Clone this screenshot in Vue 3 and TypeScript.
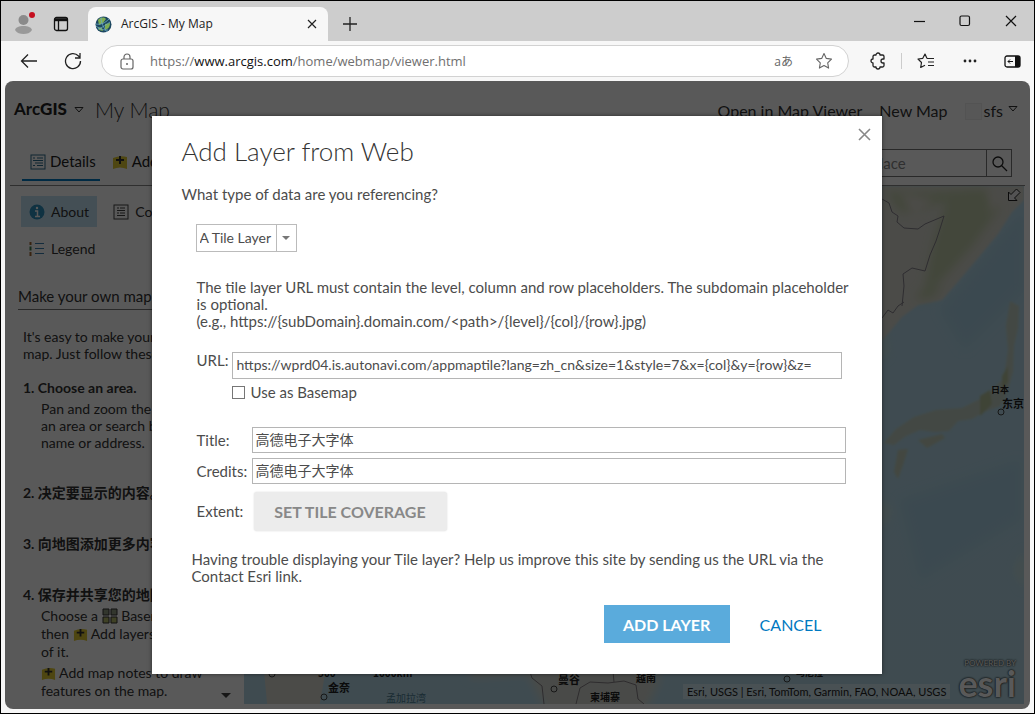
<script setup lang="ts">
import { ref } from 'vue'

interface Place { name: string; x: number; y: number; size: number; soft?: boolean }

const dataType = ref('tile')
const url = ref('https://wprd04.is.autonavi.com/appmaptile?lang=zh_cn&size=1&style=7&x={col}&y={row}&z=')
const asBasemap = ref(false)
const title = ref('高德电子大字体')
const credits = ref('高德电子大字体')
const place = ref('')

const places: Place[] = [
  { name: '日本', x: 991, y: 393, size: 9 },
  { name: '东京', x: 1002, y: 408, size: 11 },
  { name: '金奈', x: 328, y: 692, size: 11 },
  { name: '孟加拉湾', x: 386, y: 702, size: 10, soft: true },
  { name: '曼谷', x: 558, y: 684, size: 11 },
  { name: '越南', x: 636, y: 682, size: 10 },
  { name: '柬埔寨', x: 590, y: 701, size: 10 },
  { name: '马尼拉', x: 796, y: 676, size: 9 },
  { name: '500', x: 318, y: 677, size: 10 },
  { name: '1000km', x: 373, y: 677, size: 10 },
]
const cities: [number, number][] = [[1001, 412], [324, 697], [554, 689], [787, 679], [272, 674]]
</script>

<template>
  <div class="window">
    <header class="tabbar">
      <button class="bare profile" aria-label="Profile">
        <svg width="24" height="24" viewBox="0 0 24 24"><circle cx="10.500" cy="9" r="5" fill="#8a8a8a" /><path d="M2 19c1-3 4-4 8.500-4s7.500 1 8.500 4c-2 3-5 4-8.500 4S4 22 2 19z" fill="#999" /><circle cx="19" cy="4" r="3" fill="#c50f1f" /></svg>
      </button>
      <button class="bare spaces" aria-label="Tab actions">
        <svg width="16" height="16" viewBox="0 0 16 16" fill="none" stroke="#111" stroke-width="1.300"><rect x="1.500" y="1.500" width="13" height="13" rx="2" /><path d="M1.500 3h13M5.500 5v9.500" /><path d="M2 4h12" stroke-width="2.400" /></svg>
      </button>
      <div class="tab">
        <svg width="17" height="17" viewBox="0 0 17 17"><circle cx="8.500" cy="8.500" r="8" fill="#1c4760" /><path d="M3 4c3-3 6-3 8-1L8 7 4 9zM10 8l5-1c0 4-2 6-5 7zM3 11l4 1 1 3-4-1z" fill="#7fae52" /><path d="M1 8c5 1 9-1 13-5M3 13c4-1 9-5 12-7M6 1c0 5 2 10 6 15M1 10c5 4 8 4 12 4" stroke="#6fa9c4" stroke-width=".8" fill="none" /></svg>
        <span class="tab-title">ArcGIS - My Map</span>
        <button class="bare" aria-label="Close tab">
          <svg width="10" height="10" viewBox="0 0 10 10" stroke="#222" stroke-width="1.200"><path d="M1 1l8 8M9 1l-8 8" /></svg>
        </button>
      </div>
      <button class="bare newtab" aria-label="New tab">
        <svg width="14" height="14" viewBox="0 0 14 14" stroke="#222" stroke-width="1.300"><path d="M7 0v14M0 7h14" /></svg>
      </button>
      <div class="winctl">
        <button class="bare" aria-label="Minimize"><svg width="11" height="12" viewBox="0 0 11 12"><path d="M0 6.500h11" stroke="#111" stroke-width="1.200" /></svg></button>
        <button class="bare" aria-label="Maximize"><svg width="12" height="12" viewBox="0 0 12 12"><rect x="1" y="1" width="9.500" height="9.500" rx="1.500" fill="none" stroke="#111" stroke-width="1.200" /></svg></button>
        <button class="bare" aria-label="Close"><svg width="12" height="12" viewBox="0 0 12 12"><path d="M1 1l10 10M11 1L1 11" stroke="#111" stroke-width="1.200" /></svg></button>
      </div>
    </header>

    <nav class="toolbar">
      <button class="bare" aria-label="Back"><svg width="18" height="16" viewBox="0 0 18 16" fill="none" stroke="#222" stroke-width="1.300"><path d="M17 8H1.500M8 1.500L1.500 8 8 14.500" /></svg></button>
      <button class="bare reload" aria-label="Refresh"><svg width="18" height="18" viewBox="0 0 18 18" fill="none" stroke="#222" stroke-width="1.300"><path d="M16.500 9A7.500 7.500 0 1 1 14.500 4L16 5.500M16 1v5h-5" /></svg></button>
      <div class="address">
        <svg width="14" height="17" viewBox="0 0 14 17" fill="none" stroke="#666" stroke-width="1.200"><rect x="1" y="6" width="12" height="10" rx="2" /><path d="M4 6V4a3 3 0 0 1 6 0v2" /><circle cx="7" cy="11" r="1" fill="#666" stroke="none" /></svg>
        <span class="url">https://<b>www.arcgis.com</b>/home/webmap/viewer.html</span>
        <button class="bare translate" aria-label="Translate">aあ</button>
        <button class="bare" aria-label="Add to favorites"><svg width="18" height="18" viewBox="0 0 18 18" fill="none" stroke="#666" stroke-width="1.100" stroke-linejoin="round"><path d="M9 1.500l2.300 4.900 5.200.7-3.800 3.700.9 5.300L9 13.600l-4.600 2.500.9-5.300L1.500 7.100l5.200-.7z" /></svg></button>
      </div>
      <button class="bare ext" aria-label="Extensions"><svg width="18" height="18" viewBox="0 0 18 18" fill="none" stroke="#222" stroke-width="1.300" stroke-linejoin="round"><path d="M5.500 3H7a2 2 0 0 1 4 0h2.500A1.500 1.500 0 0 1 15 4.500V7h-1a2 2 0 0 0 0 4h1v2.500a1.500 1.500 0 0 1-1.500 1.500H11a2 2 0 0 1-4 0H5.500A1.500 1.500 0 0 1 4 13.500V11a2 2 0 0 1 0-4V4.500A1.500 1.500 0 0 1 5.500 3z" /></svg></button>
      <span class="sep"></span>
      <button class="bare" aria-label="Favorites"><svg width="18" height="18" viewBox="0 0 18 18" fill="none" stroke="#222" stroke-width="1.200" stroke-linejoin="round"><path d="M10 6.500L8 2 5.800 6.300 1 7l3.500 3.500L3.700 15.500 8 13.200M8 2l2 4.500M10 6.500h7M11 10h6M11 13.500h6" /></svg></button>
      <button class="bare dots" aria-label="More"><svg width="14" height="4" viewBox="0 0 14 4" fill="#222"><circle cx="2" cy="2" r="1.400" /><circle cx="7" cy="2" r="1.400" /><circle cx="12" cy="2" r="1.400" /></svg></button>
      <button class="bare side" aria-label="Sidebar"><svg width="17" height="13" viewBox="0 0 17 13"><rect x="1" y="1" width="15" height="11" rx="2" fill="none" stroke="#111" stroke-width="1.300" /><path d="M11 1h3a2 2 0 0 1 2 2v7a2 2 0 0 1-2 2h-3z" fill="#111" /><path d="M9 6.500H4M6 4.500l-2 2 2 2" fill="none" stroke="#111" /></svg></button>
    </nav>

    <main class="page">
      <div class="site-head">
        <span class="brand">Arc<b>GIS</b></span>
        <svg class="tri" width="10" height="8" viewBox="0 0 10 8" fill="none" stroke="#333"><path d="M1 1.500h8L5 6z" /></svg>
        <span class="map-name">My Map</span>
        <div class="links">
          <a href="#">Open in Map Viewer</a>
          <a href="#">New Map</a>
          <a href="#" class="user"><span class="avatar"></span>sfs
            <svg width="10" height="8" viewBox="0 0 10 8" fill="none" stroke="#333"><path d="M1 1.500h8L5 6z" /></svg></a>
        </div>
      </div>

      <div class="ribbon">
        <button class="bare rib active"><svg width="16" height="16" viewBox="0 0 16 16" fill="none" stroke="#2a6b8c"><rect x="1" y="1" width="14" height="14" /><path d="M3 4h2M7 4h6M3 6.500h10M5 9h8M3 11.500h2M7 11.500h6" /></svg>Details</button>
        <button class="bare rib"><svg width="16" height="16" viewBox="0 0 16 16"><path d="M1 4q7-3 14-1v12q-7-3-14 0z" fill="#e0c832" /><path d="M8 2v8M4 6h8" stroke="#333" stroke-width="2" /></svg>Add</button>
        <div class="finder">
          <input v-model="place" type="text" placeholder="Find address or place" aria-label="Find address or place" />
          <button class="bare" aria-label="Search"><svg width="17" height="17" viewBox="0 0 17 17" fill="none" stroke="#222" stroke-width="1.300"><circle cx="7" cy="7" r="5" /><path d="M10.500 10.500l5.500 5.500" /></svg></button>
        </div>
      </div>

      <div class="body">
        <aside class="pane">
          <div class="modes">
            <button class="bare mode on"><svg width="16" height="16" viewBox="0 0 16 16"><circle cx="8" cy="8" r="7.500" fill="#2d8fbd" /><path d="M6 7h2.500v5M6 12.500h5" stroke="#fff" stroke-width="1.500" fill="none" /><circle cx="8" cy="4" r="1.200" fill="#fff" /></svg>About</button>
            <button class="bare mode"><svg width="16" height="16" viewBox="0 0 16 16" fill="none" stroke="#444"><rect x="1" y="1" width="14" height="14" /><path d="M4 4h2M7 4h5M4 6.500h8M4 9h2M7 9h5M4 11.500h8" /></svg>Content</button>
            <button class="bare mode"><svg width="16" height="16" viewBox="0 0 16 16" fill="none"><path d="M6 2.500h9M6 7.500h9M6 12.500h9" stroke="#3b7fb0" /><path d="M1.500 1v3M1.500 11v4" stroke="#a0662e" stroke-width="2" /><path d="M1.500 5.500v4" stroke="#3f7a4a" stroke-width="2" /></svg>Legend</button>
          </div>
          <h2>Make your own map</h2>
          <p class="intro">It's easy to make your own<br />map. Just follow these steps.</p>
          <ol>
            <li><h3>1. Choose an area.</h3><p>Pan and zoom the map to<br />an area or search by its<br />name or address.</p></li>
            <li><h3>2. 决定要显示的内容。</h3></li>
            <li><h3>3. 向地图添加更多内容。</h3></li>
            <li class="last"><h3>4. 保存并共享您的地图。</h3>
              <p>Choose a <svg width="16" height="16" viewBox="0 0 16 16" fill="#8f9a80" stroke="#333"><path d="M1 1h6v6H1zM9 1h6v6H9z" /><path d="M1 9h6v6H1zM9 9h6v6H9z" fill="#b4ba6c" /></svg> Basemap<br />then <svg width="15" height="15" viewBox="0 0 16 16"><path d="M1 4q7-3 14-1v12q-7-3-14 0z" fill="#e0c832" /><path d="M8 2v8M4 6h8" stroke="#333" stroke-width="2" /></svg> Add layers on top<br />of it.</p>
              <p><svg width="15" height="15" viewBox="0 0 16 16"><path d="M1 4q7-3 14-1v12q-7-3-14 0z" fill="#e0c832" /><path d="M8 2v8M4 6h8" stroke="#333" stroke-width="2" /></svg> Add map notes to draw<br />features on the map.</p></li>
          </ol>
          <span class="more"></span>
        </aside>

        <section class="map" aria-label="Map">
          <svg class="tiles" viewBox="244 186 780 518" preserveAspectRatio="xMaxYMax slice">
            <defs>
              <linearGradient id="sea" x1="0" y1="0" x2="0" y2="1"><stop offset="0" stop-color="#b4d8e8" /><stop offset="1" stop-color="#b4d8e6" /></linearGradient>
              <filter id="soft" x="-20%" y="-20%" width="140%" height="140%"><feGaussianBlur stdDeviation="5" /></filter>
              <filter id="edge" x="-10%" y="-10%" width="120%" height="120%"><feGaussianBlur stdDeviation="1" /></filter>
            </defs>
            <rect x="244" y="186" width="780" height="518" fill="url(#sea)" />
            <path d="M940 310l84-100v80l-60 60zM900 500l120-40v60l-100 60z" fill="#aad2e5" filter="url(#soft)" />
            <path d="M882 186h142v14l-12 12-14 22-20 24-22 26-14 16-24 5-16 12-20 24z" fill="#d6d7cd" filter="url(#edge)" />
            <path d="M885 190c30 6 60 0 100-1l14 20-26 36-32 36-18 14 12-58 12-36-26 8-20 4zM918 292l26-6-12 12-14 2z" fill="#bfcba8" filter="url(#soft)" />
            <path d="M900 192l34 8-20 18zM990 190l14 6-14 20z" fill="#dad8cf" filter="url(#soft)" />
            <path d="M882 199l7 4 3 9 6 4-1 6 7 6 14 1 7-5 19-8-5 16-3 9-6 14-5 16-13-3-9 6 1 12-2 20M882 318l6-8 5 3 5-7 6-4" fill="none" stroke="#85808a" />
            <g filter="url(#edge)">
              <path d="M1010 301l9 5-1 22-4 18-1 26-7 24-6 10-16 6-12 7-14 2-9 10-14 1-15-2-14 6-12 9-10-2 12-14 18-12 22-7 26-2 24-12 18-18 4-28-2-24z" fill="#c1cfc2" />
              <path d="M918 440l24-6 3 4-18 10zM898 450l10-1-5 16-5 14-4-7z" fill="#c0ccba" />
              <path d="M980 396l10-6 2 14-12 12zM1002 376l6-10v16l-6 8z" fill="#b5c29c" />
            </g>
            <path d="M882 500l8 10-8 20zM1024 550l-8 20 8 20zM882 360l5-8-5-30z" fill="#c9dbd4" filter="url(#soft)" />
            <path d="M263 660h62l-1 20-6 34h-50z" fill="#d6d7cf" />
            <path d="M472 660h180l8 20-16 34H548l-20-40-58 4z" fill="#d2d5ce" filter="url(#soft)" />
            <path d="M526 660l6 18 10 8 2 18M576 704l4-16 10-6 18 1 16-2 12 4 2 14 6 5M612 660l2 22" fill="none" stroke="#837d83" />
            <g fill="none" stroke="#444"><circle v-for="c in cities" :key="c[0]" :cx="c[0]" :cy="c[1]" r="3" /></g>
            <text v-for="p in places" :key="p.name" :x="p.x" :y="p.y" :font-size="p.size" :class="{ faint: p.soft }">{{ p.name }}</text>
          </svg>
          <svg class="corner" width="14" height="14" viewBox="0 0 14 14" fill="#eee" stroke="#222"><path d="M1.500 4v8.500H10L7.500 10 13 4.500 9.500 1 4 6.500z" /></svg>
          <div class="credit-bar">
            <span class="attribution">Esri, USGS | Esri, TomTom, Garmin, FAO, NOAA, USGS</span>
            <span class="esri"><small>POWERED BY</small><b>esri</b></span>
          </div>
        </section>
      </div>

      <div class="veil">
        <form class="dialog" role="dialog" aria-labelledby="dlg-title" @submit.prevent>
          <button type="button" class="bare close" aria-label="Close dialog"><svg width="13" height="13" viewBox="0 0 13 13" stroke="#888" stroke-width="1.600"><path d="M1 1l11 11M12 1L1 12" /></svg></button>
          <h1 id="dlg-title">Add Layer from Web</h1>
          <label class="question" for="kind">What type of data are you referencing?</label>
          <div class="picker">
            <select id="kind" v-model="dataType"><option value="tile">A Tile Layer</option></select>
            <span class="arrow"></span>
          </div>
          <p class="hint">The tile layer URL must contain the level, column and row placeholders. The subdomain placeholder<br />is optional.<br />(e.g., https://{subDomain}.domain.com/&lt;path&gt;/{level}/{col}/{row}.jpg)</p>
          <div class="url-row">
            <label for="layer-url">URL:</label>
            <input id="layer-url" v-model="url" type="text" />
          </div>
          <label class="check"><input v-model="asBasemap" type="checkbox" />Use as Basemap</label>
          <div class="fields">
            <label for="layer-title">Title:</label><input id="layer-title" v-model="title" type="text" />
            <label for="layer-credits">Credits:</label><input id="layer-credits" v-model="credits" type="text" />
          </div>
          <div class="extent"><span>Extent:</span><button type="button" class="coverage">SET TILE COVERAGE</button></div>
          <p class="help">Having trouble displaying your Tile layer? Help us improve this site by sending us the URL via the Contact Esri link.</p>
          <div class="actions">
            <button type="submit" class="add">ADD LAYER</button>
            <button type="button" class="bare cancel">CANCEL</button>
          </div>
        </form>
      </div>
    </main>
  </div>
</template>

<style>
body { margin: 0; }
</style>

<style scoped>
.window, .window * { box-sizing: border-box; }
.window {
  min-height: 100vh; display: flex; flex-direction: column;
  border: 1px solid #000; background: #f7f7f7; color: #4c4c4c;
  font: 14px/17px Lato, "Noto Sans CJK SC", sans-serif;
}
h1, h2, h3, p, ol { margin: 0; padding: 0; font-weight: 400; }
ol { list-style: none; }
svg { display: block; flex: none; }
button, input, select { font: inherit; color: inherit; margin: 0; border-radius: 0; }
.bare { border: 0; background: none; padding: 0; display: flex; align-items: center; justify-content: center; }
a { color: inherit; text-decoration: none; }

.tabbar { height: 40px; background: #cdcdcd; display: flex; align-items: center; padding-left: 12px; }
.profile { padding-top: 4px; }
.spaces { margin: 6px 19px 0 16px; }
.tab {
  width: 240px; height: 34px; margin-top: 6px; padding: 0 11px 0 7px; background: #f7f7f7;
  border-radius: 8px 8px 0 0; display: flex; align-items: center; color: #222;
  font: 12px/16px "Open Sans", sans-serif;
}
.tab-title { flex: 1; margin-left: 9px; }
.newtab { margin: 6px 0 0 15px; }
.winctl { margin-left: auto; display: flex; }
.winctl button { width: 46px; height: 40px; }

.toolbar { height: 40px; display: flex; align-items: center; padding: 0 13px 0 19px; }
.reload { margin: 0 19px 0 26px; }
.address {
  flex: 1; height: 32px; padding: 0 15px 0 18px; border: 1px solid #d2d2d2; border-radius: 16px;
  background: #fff; display: flex; align-items: center;
}
.url { flex: 1; margin-left: 16px; color: #707070; font: 13px/18px "Open Sans", sans-serif; }
.url b { color: #111; font-weight: 400; }
.translate { margin-right: 22px; color: #666; font-family: "Open Sans", "Noto Sans CJK JP", sans-serif; font-size: 12px; }
.ext { margin-left: 20px; }
.sep { width: 1px; height: 16px; margin: 0 15px 0 14px; background: #ccc; }
.dots { margin: 0 27px 0 28px; }

.page {
  position: relative; flex: 1; margin: 0 4px 4px; border-radius: 8px; overflow: hidden;
  background: #fff; display: flex; flex-direction: column; color: #333;
}
.site-head { height: 60px; padding: 0 12px 0 9px; display: flex; align-items: center; }
.brand { font-size: 17px; font-weight: 700; margin-bottom: 6px; color: #222; }
.tri { margin: 0 11px 2px 7px; }
.map-name { font-size: 21px; line-height: 24px; font-weight: 300; margin-bottom: 3px; }
.links { margin-left: auto; display: flex; gap: 17px; font-size: 16px; line-height: 20px; }
.user { display: flex; align-items: center; gap: 2px; }
.avatar { width: 17px; height: 17px; background: #f8f8f8; border: 1px solid #eee; }
.user svg { margin: 0 0 4px 3px; }

.ribbon { height: 45px; margin: 0 5px; padding-left: 12px; border-bottom: 1px solid #888; display: flex; align-items: flex-start; }
.rib { height: 40px; gap: 4px; padding: 3px 4px 0 8px; margin-right: 4px; color: #222; font-size: 15px; border-bottom: 2px solid transparent; }
.rib.active { border-bottom-color: #0079c1; }
.finder { margin: 8px 13px 0 auto; display: flex; border: 1px solid #777; height: 28px; width: 250px; }
.finder input { flex: 1; min-width: 0; border: 0; background: none; padding: 0 4px; font-size: 15px; }
.finder input::placeholder { color: #888; }
.finder button { width: 25px; border-left: 1px solid #777; }

.body { flex: 1; display: flex; padding: 0 6px 5px 13px; }
.pane { position: relative; width: 226px; }
.modes { display: grid; grid-template-columns: auto auto; justify-content: start; gap: 6px 8px; margin: 10px 0 0 3px; }
.mode { height: 31px; gap: 6px; padding: 0 2px 0 8px; font-size: 14px; justify-content: flex-start; }
.mode.on { background: #c4e3f4; }
.pane h2 { margin-top: 23px; padding-bottom: 4px; border-bottom: 1px solid #777; font-size: 15px; line-height: 18px; }
.intro { margin: 18px 0 17px 5px; }
.pane ol { margin-left: 5px; display: grid; gap: 33px; }
.pane h3 { font-size: 14px; line-height: 18px; font-weight: 700; }
.pane li p { margin: 3px 0 0 18px; }
.pane li svg { display: inline-block; vertical-align: -3px; }
.last p { line-height: 18px; }
.more { position: absolute; right: 13px; bottom: 6px; border: 5px solid transparent; border-top-color: #444; border-bottom: 0; }

.map { position: relative; flex: 1; overflow: hidden; }
.tiles { position: absolute; inset: 0; width: 100%; height: 100%; }
.tiles text { fill: #222; font-family: "Noto Sans CJK SC", sans-serif; font-weight: 700; }
.tiles text.faint { fill: #4d7d92; font-weight: 400; }
.corner { position: absolute; right: 3px; top: 2px; }
.credit-bar { position: absolute; right: 8px; bottom: 4px; display: flex; align-items: flex-end; gap: 8px; }
.attribution { margin-bottom: 1px; padding: 0 4px; background: rgba(255, 255, 255, 0.4); font-size: 11px; line-height: 15px; color: #222; }
.esri { display: grid; justify-items: end; color: #fff; text-shadow: 0 0 2px #222, 0 0 2px #222; }
.esri small { font-size: 8px; line-height: 6px; }
.esri b { font-size: 36px; line-height: 34px; font-weight: 700; }

.veil { position: absolute; inset: 0; padding-right: 2px; background: rgba(0, 0, 0, 0.65); display: flex; align-items: center; justify-content: center; }
.dialog {
  position: relative; width: 730px; max-width: 100%; padding: 19px 30px 31px; background: #fff; color: #4c4c4c;
  box-shadow: 0 0 4px rgba(0, 0, 0, 0.5); font-size: 15px;
}
.close { position: absolute; top: 12px; right: 11px; }
h1 { font-size: 26px; line-height: 32px; font-weight: 300; color: #333; }
.question { display: block; margin-top: 19px; }
.picker { position: relative; width: 101px; height: 28px; margin: 21px 14px 0; border: 1px solid #bbb; }
.picker select { width: 100%; height: 100%; padding: 0 24px 2px 3px; border: 0; background: none; appearance: none; font-size: 14px; }
.arrow { position: absolute; top: 0; right: 0; width: 20px; height: 26px; border-left: 1px solid #bbb; pointer-events: none; display: grid; place-items: center; }
.arrow::after { content: ""; border: 4px solid transparent; border-top-color: #777; border-bottom: 0; }
.hint { margin: 27px 0 0 15px; }
.url-row { display: flex; gap: 4px; margin: 22px 10px 0 15px; }
.url-row input { flex: 1; min-width: 0; height: 27px; }
.dialog input[type="text"] { border: 1px solid #b5b5b5; padding: 0 3px 2px; background: #fff; outline: 0; font-size: 14px; }
.check { display: flex; align-items: center; gap: 6px; margin: 5px 0 0 50px; }
.check input { appearance: none; width: 13px; height: 13px; border: 1px solid #767676; background: #fff; }
.fields { display: grid; grid-template-columns: 50px 1fr; gap: 5px; align-items: center; margin: 26px 6px 0 15px; }
.fields input { height: 26px; min-width: 0; }
.extent { display: grid; grid-template-columns: 57px auto; justify-content: start; align-items: center; margin: 8px 0 0 15px; }
.coverage { height: 39px; width: 193px; border: 0; border-radius: 3px; background: #ececec; color: #888; font-size: 16px; font-weight: 700; box-shadow: 0 0 2px #ddd; }
.help { margin: 20px 15px 0 10px; }
.actions { display: flex; justify-content: flex-end; gap: 30px; margin: 20px 30px 0 0; font-size: 16px; }
.add { height: 38px; width: 126px; border: 0; background: #5aabdc; color: #fff; font-weight: 700; }
.cancel { color: #0079c1; }
</style>
